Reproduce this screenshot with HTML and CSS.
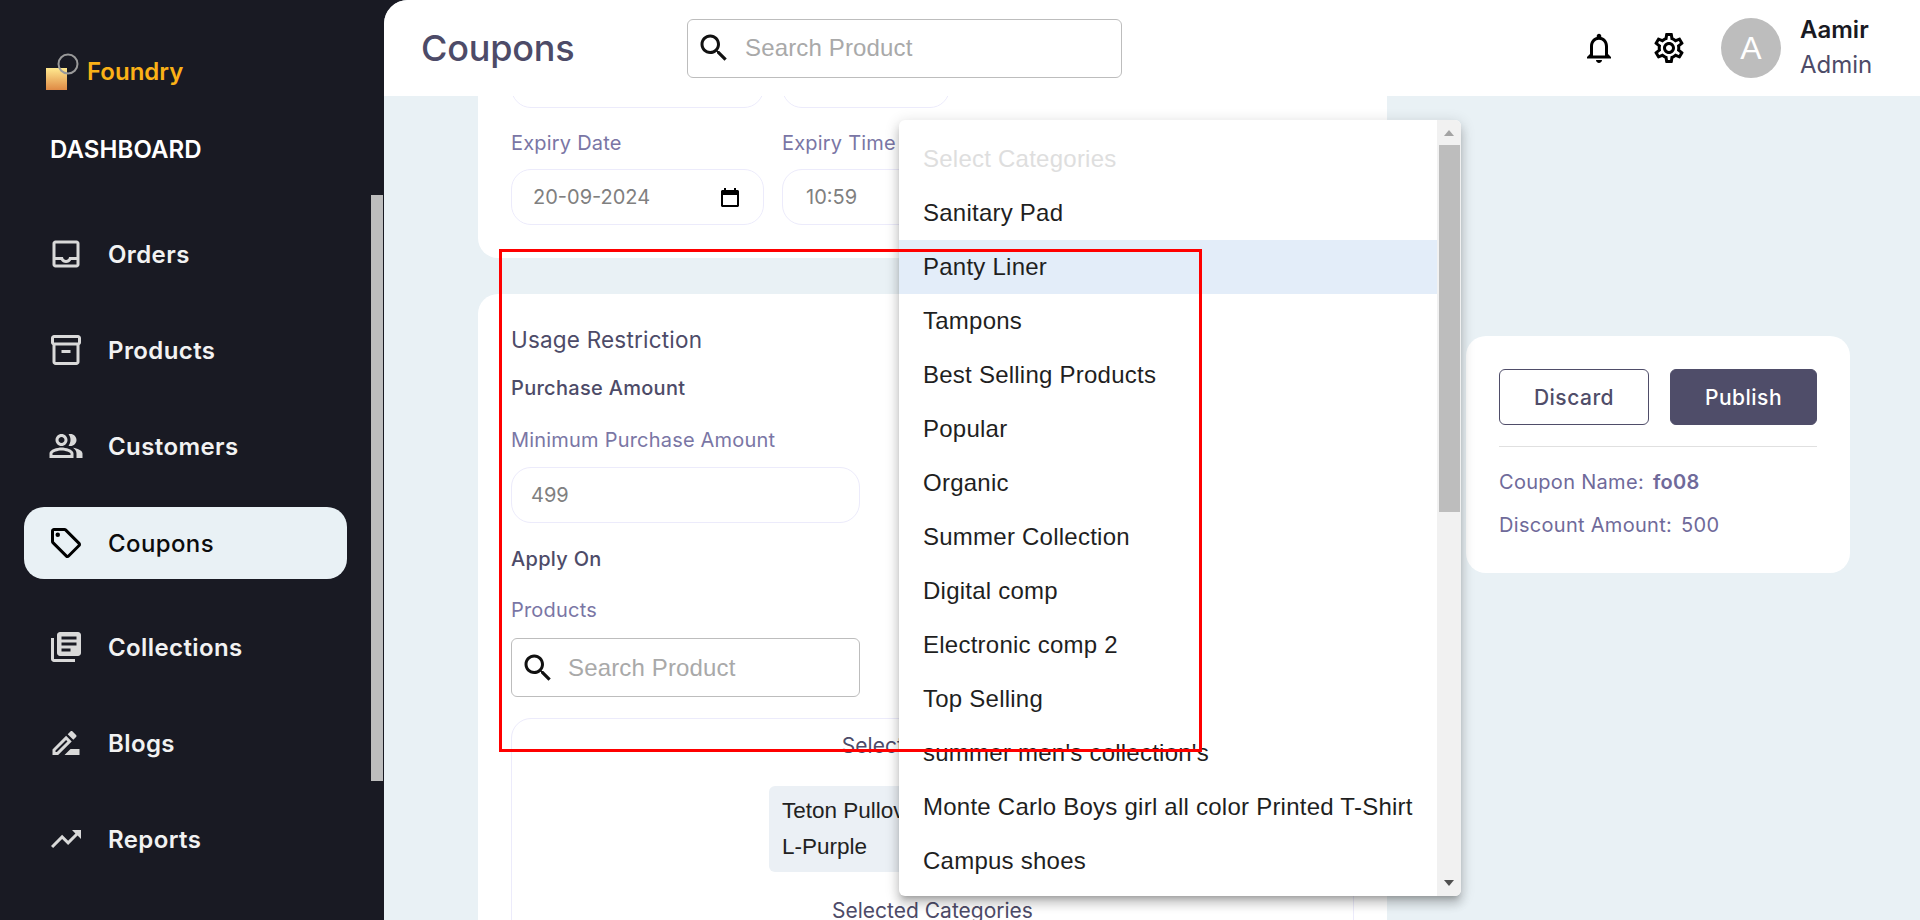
FILE: index.html
```html
<!DOCTYPE html>
<html lang="en">
<head>
  <meta charset="UTF-8" />
  <title>Coupons</title>
  <link rel="stylesheet" href="styles.css">
</head>
<body>
  <aside class="sidebar">
    <div class="sidebar-inner">
      <div class="logo">
        <svg class="logo-mark" width="36" height="40" viewBox="0 0 36 40">
          <defs>
            <linearGradient id="logoFill" x1="0" y1="0" x2="0" y2="1">
              <stop offset="0" stop-color="#ffe98f" />
              <stop offset="1" stop-color="#df8a45" />
            </linearGradient>
          </defs>
          <rect x="0" y="16" width="21" height="22" fill="url(#logoFill)" />
          <circle cx="22" cy="12" r="9.5" fill="none" stroke="#9a9a9a" stroke-width="2" />
        </svg>
        <span class="logo-name">Foundry</span>
      </div>
      <div class="dash-title">DASHBOARD</div>
      <nav class="nav">
        <a class="nav-item">
          <svg class="nav-icon" viewBox="0 0 24 24"><path d="M19 3H5c-1.1 0-2 .9-2 2v14c0 1.1.9 2 2 2h14c1.1 0 2-.9 2-2V5c0-1.1-.9-2-2-2zm0 16H5v-3h3.56c.69 1.19 1.97 2 3.45 2s2.75-.81 3.45-2H19v3zm0-5h-4.99c0 1.1-.9 2-2 2s-2-.9-2-2H5V5h14v9z"/></svg>
          Orders
        </a>
        <a class="nav-item">
          <svg class="nav-icon" viewBox="0 0 24 24"><path d="M20 2H4c-1 0-2 .9-2 2v3.01c0 .72.43 1.34 1 1.69V20c0 1.1 1.1 2 2 2h14c.9 0 2-.9 2-2V8.7c.57-.35 1-.97 1-1.69V4c0-1.1-1-2-2-2zm-1 18H5V9h14v11zm1-13H4V4h16v3z"/><path d="M9 12h6v2H9z"/></svg>
          Products
        </a>
        <a class="nav-item">
          <svg class="nav-icon" viewBox="0 0 24 24"><path d="M16.67 13.13C18.04 14.06 19 15.32 19 17v3h4v-3c0-2.18-3.57-3.47-6.33-3.87z"/><path d="M15 12c2.21 0 4-1.79 4-4s-1.79-4-4-4c-.47 0-.91.1-1.33.24C14.5 5.27 15 6.58 15 8s-.5 2.73-1.33 3.76c.42.14.86.24 1.33.24z"/><path d="M9 12c2.21 0 4-1.79 4-4s-1.79-4-4-4-4 1.79-4 4 1.79 4 4 4zm0-6c1.1 0 2 .9 2 2s-.9 2-2 2-2-.9-2-2 .9-2 2-2z"/><path d="M9 13c-2.67 0-8 1.34-8 4v3h16v-3c0-2.66-5.33-4-8-4zm6 5H3v-.99C3.2 16.29 6.3 15 9 15s5.8 1.29 6 2v1z"/></svg>
          Customers
        </a>
        <a class="nav-item active">
          <svg class="nav-icon" viewBox="0 0 24 24"><path d="M21.41 11.58l-9-9C12.05 2.22 11.55 2 11 2H4c-1.1 0-2 .9-2 2v7c0 .55.22 1.05.59 1.42l9 9c.36.36.86.58 1.41.58s1.05-.22 1.41-.59l7-7c.37-.36.59-.86.59-1.41s-.23-1.06-.59-1.42zM13 20.01L4 11V4h7v-.01l9 9-7 7.02z"/><circle cx="6.5" cy="6.5" r="1.5"/></svg>
          Coupons
        </a>
        <a class="nav-item">
          <svg class="nav-icon" viewBox="0 0 24 24"><path d="M4 6H2v14c0 1.1.9 2 2 2h14v-2H4V6zm16-4H8c-1.1 0-2 .9-2 2v12c0 1.1.9 2 2 2h12c1.1 0 2-.9 2-2V4c0-1.1-.9-2-2-2zm-1 9H9V9h10v2zm-4 4H9v-2h6v2zm4-8H9V5h10v2z"/></svg>
          Collections
        </a>
        <a class="nav-item">
          <svg class="nav-icon" viewBox="0 0 24 24"><path d="M15 16l-4 4h10v-4zM12.06 7.19L3 16.25V20h3.75l9.06-9.06-3.75-3.75zM5.92 18H5v-.92l7.06-7.06.92.92L5.92 18zM18.71 8.04c.39-.39.39-1.02 0-1.41l-2.34-2.34c-.2-.2-.45-.29-.71-.29s-.51.1-.7.29l-1.83 1.83 3.75 3.75 1.83-1.83z"/></svg>
          Blogs
        </a>
        <a class="nav-item">
          <svg class="nav-icon" viewBox="0 0 24 24"><path d="M16 6l2.29 2.29-4.88 4.88-4-4L2 16.59 3.41 18l6-6 4 4 6.3-6.29L22 12V6z"/></svg>
          Reports
        </a>
      </nav>
    </div>
    <div class="sidebar-track"><div class="sidebar-thumb"></div></div>
  </aside>

  <main class="main">
    <header class="topbar">
      <h1 class="page-title">Coupons</h1>
      <label class="search search-top">
        <svg class="search-icon" viewBox="0 0 24 24"><path d="M15.5 14h-.79l-.28-.27C15.41 12.59 16 11.11 16 9.5 16 5.91 13.09 3 9.5 3S3 5.91 3 9.5 5.91 16 9.5 16c1.61 0 3.09-.59 4.23-1.57l.27.28v.79l5 4.99L20.49 19l-4.99-5zm-6 0C7.01 14 5 11.99 5 9.5S7.01 5 9.5 5 14 7.01 14 9.5 11.99 14 9.5 14z"/></svg>
        <input type="text" placeholder="Search Product" />
      </label>
      <div class="top-actions">
        <svg class="top-icon" viewBox="0 0 24 24"><path d="M12 22c1.1 0 2-.9 2-2h-4c0 1.1.9 2 2 2zm6-6v-5c0-3.07-1.63-5.64-4.5-6.32V4c0-.83-.67-1.5-1.5-1.5s-1.5.67-1.5 1.5v.68C7.64 5.36 6 7.92 6 11v5l-2 2v1h16v-1l-2-2zm-2 1H8v-6c0-2.48 1.51-4.5 4-4.5s4 2.02 4 4.5v6z"/></svg>
        <svg class="top-icon" viewBox="0 0 24 24"><path d="M19.43 12.98c.04-.32.07-.64.07-.98 0-.34-.03-.66-.07-.98l2.11-1.65c.19-.15.24-.42.12-.64l-2-3.46c-.09-.16-.26-.25-.44-.25-.06 0-.12.01-.17.03l-2.49 1c-.52-.4-1.08-.73-1.69-.98l-.38-2.65C14.46 2.18 14.25 2 14 2h-4c-.25 0-.46.18-.49.42l-.38 2.65c-.61.25-1.17.59-1.69.98l-2.49-1c-.06-.02-.12-.03-.18-.03-.17 0-.34.09-.43.25l-2 3.46c-.13.22-.07.49.12.64l2.11 1.65c-.04.32-.07.65-.07.98 0 .33.03.66.07.98l-2.11 1.65c-.19.15-.24.42-.12.64l2 3.46c.09.16.26.25.44.25.06 0 .12-.01.17-.03l2.49-1c.52.4 1.08.73 1.69.98l.38 2.65c.03.24.24.42.49.42h4c.25 0 .46-.18.49-.42l.38-2.65c.61-.25 1.17-.59 1.69-.98l2.49 1c.06.02.12.03.18.03.17 0 .34-.09.43-.25l2-3.46c.12-.22.07-.49-.12-.64l-2.11-1.65zm-1.98-1.71c.04.31.05.52.05.73 0 .21-.02.43-.05.73l-.14 1.13.89.7 1.08.84-.7 1.21-1.27-.51-1.04-.42-.9.68c-.43.32-.84.56-1.25.73l-1.06.43-.16 1.13-.2 1.35h-1.4l-.19-1.35-.16-1.13-1.06-.43c-.43-.18-.83-.41-1.23-.71l-.91-.7-1.06.43-1.27.51-.7-1.21 1.08-.84.89-.7-.14-1.13c-.03-.31-.05-.54-.05-.74s.02-.43.05-.73l.14-1.13-.89-.7-1.08-.84.7-1.21 1.27.51 1.04.42.9-.68c.43-.32.84-.56 1.25-.73l1.06-.43.16-1.13.2-1.35h1.39l.19 1.35.16 1.13 1.06.43c.43.18.83.41 1.23.71l.91.7 1.06-.43 1.27-.51.7 1.21-1.07.85-.89.7.14 1.13zM12 8c-2.21 0-4 1.79-4 4s1.79 4 4 4 4-1.79 4-4-1.79-4-4-4zm0 6c-1.1 0-2-.9-2-2s.9-2 2-2 2 .9 2 2-.9 2-2 2z"/></svg>
        <div class="avatar">A</div>
        <div class="user">
          <div class="user-name">Aamir</div>
          <div class="user-role">Admin</div>
        </div>
      </div>
    </header>

    <div class="content">
      <div class="form-col">
        <section class="card card-schedule">
          <div class="field-row row-clipped">
            <div class="field field-date"></div>
            <div class="field field-time"></div>
          </div>
          <div class="field-row">
            <span class="field-label label-date">Expiry Date</span>
            <span class="field-label label-time">Expiry Time</span>
          </div>
          <div class="field-row">
            <div class="field field-date">
              <span>20-09-2024</span>
              <svg class="calendar" width="18" height="19" viewBox="0 0 18 19"><path d="M3 0h2v2h8V0h2v2h1.5c.8 0 1.5.7 1.5 1.5v14c0 .8-.7 1.5-1.5 1.5h-15C.7 19 0 18.3 0 17.5v-14C0 2.7.7 2 1.5 2H3zM2 7v10h14V7z"/></svg>
            </div>
            <div class="field field-time"><span>10:59</span></div>
          </div>
        </section>

        <section class="card card-usage">
          <h2 class="usage-title">Usage Restriction</h2>
          <h3 class="sub-title first">Purchase Amount</h3>
          <div class="field-label min-label">Minimum Purchase Amount</div>
          <div class="field field-amount"><span>499</span></div>
          <h3 class="sub-title apply">Apply On</h3>
          <div class="field-label products-label">Products</div>
          <label class="search search-usage">
            <svg class="search-icon" viewBox="0 0 24 24"><path d="M15.5 14h-.79l-.28-.27C15.41 12.59 16 11.11 16 9.5 16 5.91 13.09 3 9.5 3S3 5.91 3 9.5 5.91 16 9.5 16c1.61 0 3.09-.59 4.23-1.57l.27.28v.79l5 4.99L20.49 19l-4.99-5zm-6 0C7.01 14 5 11.99 5 9.5S7.01 5 9.5 5 14 7.01 14 9.5 11.99 14 9.5 14z"/></svg>
            <input type="text" placeholder="Search Product" />
          </label>
          <div class="selected-box">
            <div class="selected-title">Selected Products</div>
            <div class="chip">Teton Pullover Hoodie<br>L-Purple</div>
            <div class="selected-title categories">Selected Categories</div>
          </div>
        </section>
      </div>

      <section class="card card-summary">
        <div class="summary-actions">
          <button class="btn btn-discard">Discard</button>
          <button class="btn btn-publish">Publish</button>
        </div>
        <div class="summary-line first">Coupon Name: <b>fo08</b></div>
        <div class="summary-line">Discount Amount: <span>500</span></div>
      </section>
    </div>
  </main>

  <!-- open category select -->
  <div class="menu">
    <ul class="menu-list">
      <li class="menu-item disabled">Select Categories</li>
      <li class="menu-item">Sanitary Pad</li>
      <li class="menu-item hover">Panty Liner</li>
      <li class="menu-item">Tampons</li>
      <li class="menu-item">Best Selling Products</li>
      <li class="menu-item">Popular</li>
      <li class="menu-item">Organic</li>
      <li class="menu-item">Summer Collection</li>
      <li class="menu-item">Digital comp</li>
      <li class="menu-item">Electronic comp 2</li>
      <li class="menu-item">Top Selling</li>
      <li class="menu-item">summer men's collection's</li>
      <li class="menu-item">Monte Carlo Boys girl all color Printed T-Shirt</li>
      <li class="menu-item">Campus shoes</li>
    </ul>
    <div class="menu-track">
      <div class="arrow arrow-up"></div>
      <div class="menu-thumb"></div>
      <div class="arrow arrow-down"></div>
    </div>
  </div>

  <div class="highlight-box"></div>
</body>
</html>
```

FILE: styles.css
```css
* {
  box-sizing: border-box;
}

body {
  margin: 0;
  width: 1920px;
  height: 920px;
  overflow: hidden;
  display: flex;
  background-color: #191a23;
  font-family: Inter, "Liberation Sans", sans-serif;
}

h1, h2, h3 {
  margin: 0;
}

/* Sidebar */
.sidebar {
  width: 384px;
  flex-shrink: 0;
  display: flex;
  background-color: #191a23;
}

.sidebar-inner {
  flex: 1;
  padding-top: 52px;
}

.sidebar-track {
  width: 13px;
  padding-right: 1px;
}

.sidebar-thumb {
  margin-top: 195px;
  height: 586px;
  background-color: #bdbdbd;
}

.logo {
  display: flex;
  margin-left: 46px;
  height: 40px;
}

.logo-mark {
  flex-shrink: 0;
}

.logo-name {
  margin-left: 5px;
  margin-top: 7px;
  line-height: 26px;
  font-size: 24px;
  font-weight: 600;
  color: #fbb117;
}

.dash-title {
  margin: 41px 0 0 50px;
  line-height: 34px;
  font-size: 24px;
  font-weight: 600;
  letter-spacing: 0.1px;
  color: #fff;
}

.nav {
  margin-top: 51px;
  display: flex;
  flex-direction: column;
  gap: 24px;
}

.nav-item {
  display: flex;
  align-items: center;
  gap: 24px;
  width: 323px;
  height: 72px;
  margin-left: 24px;
  padding-left: 24px;
  border-radius: 20px;
  font-size: 24px;
  font-weight: 600;
  letter-spacing: 0.4px;
  color: #f2f2f2;
}

.nav-icon {
  width: 36px;
  height: 36px;
  fill: #d9d9d9;
}

.nav-item.active {
  margin-top: 1px;
  margin-bottom: 8px;
  background-color: #e9f1f5;
  font-weight: 500;
  color: #0c0c0c;
}

.nav-item.active .nav-icon {
  fill: #000;
}

/* Main */
.main {
  flex: 1;
  min-width: 0;
  height: 920px;
  overflow: hidden;
  background-color: #e9f1f5;
  border-top-left-radius: 24px;
}

.topbar {
  height: 96px;
  display: flex;
  align-items: center;
  background-color: #fff;
  position: relative;
  z-index: 1;
}

.page-title {
  width: 303px;
  padding-left: 37px;
  font-size: 36px;
  font-weight: 500;
  letter-spacing: -0.2px;
  color: #4d4b68;
}

.search {
  display: flex;
  align-items: center;
  background-color: #fff;
  border: 1px solid #bdbdbd;
  border-radius: 6px;
}

.search input {
  flex: 1;
  min-width: 0;
  border: none;
  outline: none;
  padding: 0;
  background: transparent;
  font-family: "Liberation Sans", Arial, sans-serif;
  font-size: 24px;
  letter-spacing: 0.15px;
}

.search input::placeholder {
  color: #a9a9a9;
  opacity: 1;
}

.search-icon {
  width: 36px;
  height: 36px;
  flex-shrink: 0;
  fill: #111;
}

.search-top {
  width: 435px;
  height: 59px;
  padding-left: 8px;
  gap: 13px;
}

.top-actions {
  margin-left: auto;
  display: flex;
  align-items: center;
}

.top-icon {
  width: 36px;
  height: 36px;
  margin-right: 34px;
  fill: #000;
}

.avatar {
  width: 60px;
  height: 60px;
  border-radius: 50%;
  display: flex;
  align-items: center;
  justify-content: center;
  background-color: #bdbdbd;
  color: #fff;
  font-family: "Liberation Sans", Arial, sans-serif;
  font-size: 32px;
}

.user {
  width: 139px;
  padding-left: 19px;
  padding-bottom: 2px;
}

.user-name {
  line-height: 36px;
  font-size: 24px;
  font-weight: 600;
  color: #191a23;
}

.user-role {
  line-height: 34px;
  font-size: 24px;
  color: #4d4b68;
}

/* Page content */
.content {
  display: flex;
  align-items: flex-start;
  padding-left: 94px;
}

.form-col {
  width: 909px;
  flex-shrink: 0;
}

.card {
  background-color: #fff;
  border-radius: 20px;
}

.card-schedule {
  height: 162px;
  padding: 0 33px;
  border-radius: 0 0 20px 20px;
  overflow: hidden;
}

.field-row {
  display: flex;
  gap: 18px;
}

.row-clipped {
  margin-top: -44px;
  margin-bottom: 22px;
}

.field {
  height: 56px;
  display: flex;
  align-items: center;
  justify-content: space-between;
  padding: 0 19px;
  border: 1px solid #ecebfb;
  border-radius: 20px;
  font-size: 20px;
  color: #808080;
}

.field-date {
  width: 253px;
}

.field-time {
  width: 168px;
}

.field-date span {
  margin-left: 2px;
}

.field-time span {
  margin-left: 4px;
}

.calendar {
  flex-shrink: 0;
  margin-right: 5px;
}

.field-label {
  display: block;
  line-height: 26px;
  font-size: 20px;
  color: #7a76a5;
  letter-spacing: 0.2px;
}

.label-date {
  width: 253px;
  margin-bottom: 13px;
}

.label-time {
  width: 168px;
  margin-bottom: 13px;
}

.card-usage {
  margin-top: 36px;
  height: 700px;
  padding: 31px 33px 0;
}

.usage-title {
  line-height: 30px;
  font-size: 22.5px;
  font-weight: 400;
  letter-spacing: 0.2px;
  color: #4d4b68;
}

.sub-title {
  line-height: 24px;
  font-size: 20px;
  font-weight: 500;
  letter-spacing: 0.3px;
  color: #4d4b68;
}

.sub-title.first {
  margin-top: 21px;
}

.min-label {
  margin-top: 27px;
  margin-bottom: 14px;
}

.field-amount {
  width: 349px;
}

.sub-title.apply {
  margin-top: 24px;
}

.products-label {
  margin-top: 26px;
  margin-bottom: 15px;
}

.search-usage {
  width: 349px;
  height: 59px;
  padding-left: 8px;
  gap: 12px;
}

.selected-box {
  margin-top: 21px;
  width: 843px;
  height: 400px;
  padding-top: 14px;
  border: 1px solid #ecebfb;
  border-radius: 20px;
}

.selected-title {
  line-height: 26px;
  font-size: 21px;
  text-align: center;
  color: #4d4b68;
}

.selected-title.categories {
  margin-top: 26px;
}

.chip {
  width: 327px;
  margin: 27px auto 0;
  padding: 7px 13px;
  border-radius: 6px;
  background-color: #ebf0f5;
  font-family: "Liberation Sans", Arial, sans-serif;
  font-size: 22.5px;
  line-height: 36px;
  color: #222;
}

/* Summary card */
.card-summary {
  width: 384px;
  margin: 240px 0 0 79px;
  padding: 33px 33px 35px;
}

.summary-actions {
  display: flex;
  gap: 21px;
  padding-bottom: 21px;
  border-bottom: 1px solid #e0e0e0;
}

.btn {
  height: 56px;
  border-radius: 6px;
  font-family: Inter, sans-serif;
  font-size: 21px;
  font-weight: 500;
  letter-spacing: 0.5px;
}

.btn-discard {
  width: 150px;
  background-color: #fff;
  border: 1px solid #4f4d69;
  color: #4f4d69;
}

.btn-publish {
  width: 147px;
  background-color: #4f4d69;
  border: 1px solid #4f4d69;
  color: #fff;
}

.summary-line {
  margin-top: 17px;
  line-height: 26px;
  font-size: 20px;
  color: #6f6a9a;
  letter-spacing: 0.3px;
}

.summary-line.first {
  margin-top: 22px;
}

.summary-line b,
.summary-line span {
  margin-left: 3px;
}

.summary-line b {
  font-weight: 600;
}

/* Open select menu */
.menu {
  position: absolute;
  left: 899px;
  top: 120px;
  width: 562px;
  height: 776px;
  display: flex;
  overflow: hidden;
  background-color: #fff;
  border-radius: 6px;
  box-shadow: 0 5px 5px -3px rgba(0, 0, 0, 0.2), 0 8px 10px 1px rgba(0, 0, 0, 0.14), 0 3px 14px 2px rgba(0, 0, 0, 0.12);
  z-index: 5;
}

.menu-list {
  flex: 1;
  margin: 0;
  padding: 12px 0 0;
  list-style: none;
}

.menu-item {
  height: 54px;
  padding: 0 24px;
  line-height: 54px;
  white-space: nowrap;
  font-family: "Liberation Sans", Arial, sans-serif;
  font-size: 24px;
  letter-spacing: 0.24px;
  color: #1f1f1f;
}

.menu-item.disabled {
  color: #dedede;
}

.menu-item.hover {
  background-color: #e3edf9;
}

.menu-track {
  width: 25px;
  flex-shrink: 0;
  display: flex;
  flex-direction: column;
  align-items: center;
  padding: 10px 0;
  background-color: #f1f1f1;
}

.arrow {
  width: 0;
  height: 0;
  border-left: 5.5px solid transparent;
  border-right: 5.5px solid transparent;
}

.arrow-up {
  border-bottom: 6px solid #a3a3a3;
}

.arrow-down {
  margin-top: auto;
  border-top: 6px solid #505050;
}

.menu-thumb {
  width: 21px;
  height: 367px;
  margin-top: 9px;
  background-color: #bdbdbd;
}

/* Red review outline */
.highlight-box {
  position: absolute;
  left: 499px;
  top: 249px;
  width: 703px;
  height: 503px;
  border: 3px solid #f00;
  z-index: 6;
  pointer-events: none;
}
```
